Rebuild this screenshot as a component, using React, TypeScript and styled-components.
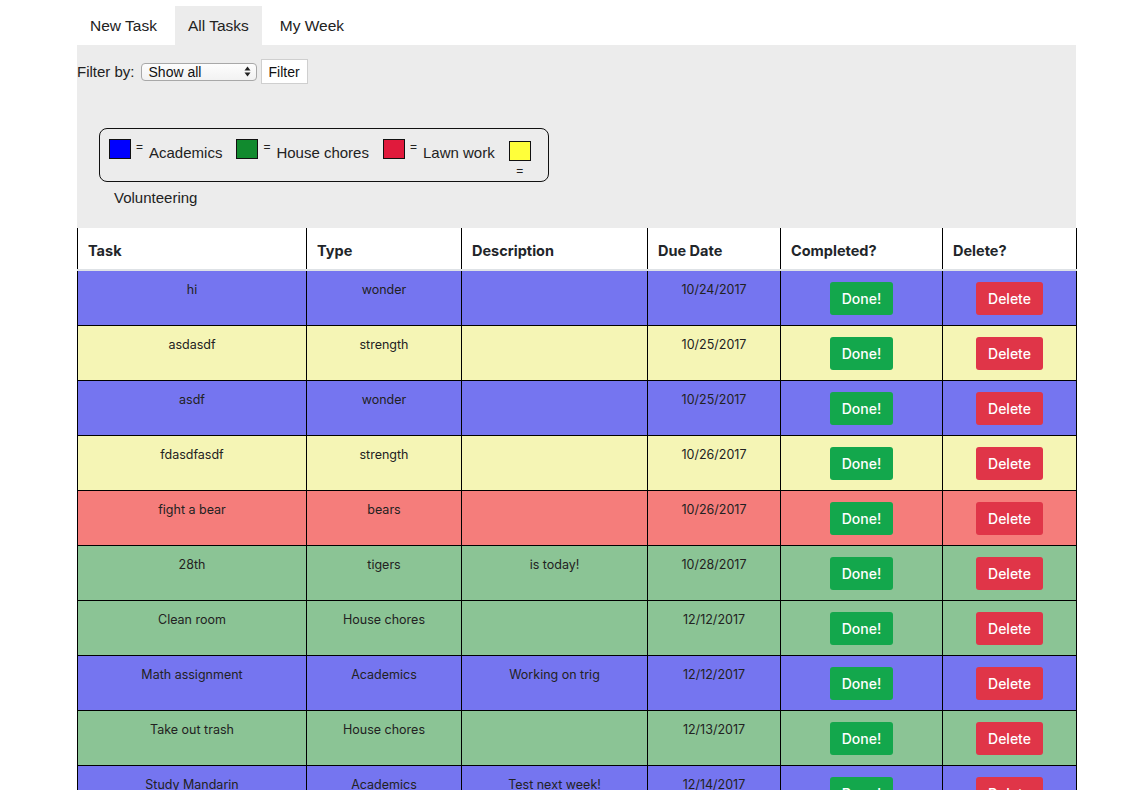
import React from "react";
import styled, { createGlobalStyle } from "styled-components";

const GlobalStyle = createGlobalStyle`
  body {
    margin: 0;
    background: #fff;
    font-family: "Liberation Sans", Arial, sans-serif;
    color: #222;
  }
`;

const Page = styled.div`
  width: 999px;
  padding: 6px 0 0 77px;
`;

const Tabs = styled.div`
  display: flex;
  gap: 5px;
  height: 39px;
`;

const Tab = styled.div<{ $active?: boolean }>`
  display: flex;
  align-items: center;
  padding: 0 13px;
  font-size: 15.5px;
  color: #222;
  background: ${(p) => (p.$active ? "#ececec" : "transparent")};
`;

const Panel = styled.div`
  background: #ececec;
  height: 183px;
  padding-top: 14px;
  box-sizing: border-box;
`;

const FilterRow = styled.div`
  display: flex;
  align-items: center;
  font-size: 15px;
  gap: 4px;
`;

const Select = styled.div`
  width: 116px;
  height: 18px;
  box-sizing: border-box;
  border: 1px solid #a8a8a8;
  border-radius: 4px;
  background: linear-gradient(#fdfdfd, #f2f2f2);
  display: flex;
  align-items: center;
  justify-content: space-between;
  padding: 0 5px 0 7px;
  font-size: 14px;
  color: #111;
  margin-left: 2px;
`;

const FilterButton = styled.button`
  height: 25px;
  padding: 0 7px;
  border: 1px solid #cfcfcf;
  background: #fff;
  font-family: "Liberation Sans", Arial, sans-serif;
  font-size: 14px;
  color: #111;
`;

const Legend = styled.div`
  margin: 44px 0 0 22px;
  width: 450px;
  height: 54px;
  box-sizing: border-box;
  border: 1px solid #111;
  border-radius: 8px;
  padding: 10px 0 0 9px;
  display: flex;
  flex-wrap: wrap;
  align-content: flex-start;
  font-size: 15px;
`;

const LegendItem = styled.div`
  display: flex;
  align-items: flex-start;
  margin-right: 14px;
`;

const Swatch = styled.div<{ $color: string }>`
  width: 22px;
  height: 20px;
  box-sizing: border-box;
  border: 1px solid #111;
  background: ${(p) => p.$color};
`;

const Equals = styled.span`
  font-size: 12px;
  margin: 1px 6px 0 5px;
  line-height: 14px;
`;

const LegendLabel = styled.span`
  margin-top: 5px;
  line-height: 18px;
`;

const StackedItem = styled.div`
  display: flex;
  flex-direction: column;
  align-items: center;
  line-height: 14px;
  padding-top: 2px;

  ${Equals} {
    margin: 3px 0 0;
  }
`;

const Overflow = styled.div`
  margin: 11px 0 0 5px;
  line-height: 18px;
  width: 100%;
`;

const Table = styled.table`
  width: 999px;
  border-collapse: collapse;
  font-family: Inter, "Liberation Sans", sans-serif;
  table-layout: fixed;
`;

const Th = styled.th<{ $w: number }>`
  width: ${(p) => p.$w}px;
  height: 42px;
  box-sizing: border-box;
  text-align: left;
  padding: 3px 10px 0;
  font-size: 14.5px;
  font-weight: 700;
  color: #212529;
  border-left: 1px solid #000;
  border-right: 1px solid #000;
  border-bottom: 2px solid #dee2e6;
  background: #fff;
`;

const Row = styled.tr<{ $bg: string }>`
  background: ${(p) => p.$bg};
`;

const Td = styled.td`
  height: 55px;
  box-sizing: border-box;
  vertical-align: top;
  text-align: center;
  padding: 11px 8px 0;
  font-size: 12.5px;
  line-height: 15px;
  color: #222;
  border: 1px solid #000;
`;

const ActionButton = styled.button<{ $kind: "done" | "delete" }>`
  height: 33px;
  padding: 0 12px;
  border: none;
  border-radius: 3px;
  font-family: Inter, "Liberation Sans", sans-serif;
  font-size: 14px;
  font-weight: 500;
  color: #fff;
  background: ${(p) => (p.$kind === "done" ? "#13a74c" : "#e03548")};
`;

const colors: Record<string, string> = {
  blue: "#7575f0",
  yellow: "#f5f5b5",
  red: "#f57d7b",
  green: "#8bc495",
};

const tasks = [
  { task: "hi", type: "wonder", desc: "", due: "10/24/2017", c: "blue" },
  { task: "asdasdf", type: "strength", desc: "", due: "10/25/2017", c: "yellow" },
  { task: "asdf", type: "wonder", desc: "", due: "10/25/2017", c: "blue" },
  { task: "fdasdfasdf", type: "strength", desc: "", due: "10/26/2017", c: "yellow" },
  { task: "fight a bear", type: "bears", desc: "", due: "10/26/2017", c: "red" },
  { task: "28th", type: "tigers", desc: "is today!", due: "10/28/2017", c: "green" },
  { task: "Clean room", type: "House chores", desc: "", due: "12/12/2017", c: "green" },
  { task: "Math assignment", type: "Academics", desc: "Working on trig", due: "12/12/2017", c: "blue" },
  { task: "Take out trash", type: "House chores", desc: "", due: "12/13/2017", c: "green" },
  { task: "Study Mandarin", type: "Academics", desc: "Test next week!", due: "12/14/2017", c: "blue" },
];

const legend = [
  { color: "#0000ff", label: "Academics" },
  { color: "#118a2e", label: "House chores" },
  { color: "#e01a3c", label: "Lawn work" },
];

const columns: [string, number][] = [
  ["Task", 229],
  ["Type", 155],
  ["Description", 186],
  ["Due Date", 133],
  ["Completed?", 162],
  ["Delete?", 134],
];

const App = () => {
  return (
    <Page>
      <GlobalStyle />
      <Tabs>
        <Tab>New Task</Tab>
        <Tab $active>All Tasks</Tab>
        <Tab>My Week</Tab>
      </Tabs>
      <Panel>
        <FilterRow>
          Filter by:
          <Select>
            <span>Show all</span>
            <svg width="7" height="11" viewBox="0 0 7 11">
              <path d="M3.5 0.5 L6.5 4.5 H0.5 Z M3.5 10.5 L6.5 6.5 H0.5 Z" fill="#222" />
            </svg>
          </Select>
          <FilterButton>Filter</FilterButton>
        </FilterRow>
        <Legend>
          {legend.map((l) => (
            <LegendItem key={l.label}>
              <Swatch $color={l.color} />
              <Equals>=</Equals>
              <LegendLabel>{l.label}</LegendLabel>
            </LegendItem>
          ))}
          <StackedItem>
            <Swatch $color="#ffff3a" />
            <Equals>=</Equals>
          </StackedItem>
          <Overflow>Volunteering</Overflow>
        </Legend>
      </Panel>
      <Table>
        <thead>
          <tr>
            {columns.map(([name, w]) => (
              <Th key={name} $w={w}>
                {name}
              </Th>
            ))}
          </tr>
        </thead>
        <tbody>
          {tasks.map((t, i) => (
            <Row key={i} $bg={colors[t.c]}>
              <Td>{t.task}</Td>
              <Td>{t.type}</Td>
              <Td>{t.desc}</Td>
              <Td>{t.due}</Td>
              <Td>
                <ActionButton $kind="done">Done!</ActionButton>
              </Td>
              <Td>
                <ActionButton $kind="delete">Delete</ActionButton>
              </Td>
            </Row>
          ))}
        </tbody>
      </Table>
    </Page>
  );
};

export default App;
